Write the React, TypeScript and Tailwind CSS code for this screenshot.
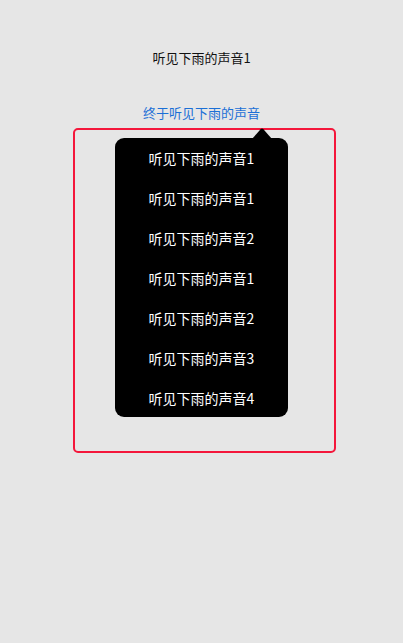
const items = [
  "听见下雨的声音1",
  "听见下雨的声音1",
  "听见下雨的声音2",
  "听见下雨的声音1",
  "听见下雨的声音2",
  "听见下雨的声音3",
  "听见下雨的声音4",
];

const font = { fontFamily: '"Noto Sans CJK SC", "Noto Sans", sans-serif' };

export default function App() {
  return (
    <div className="w-full min-h-[643px] bg-[#e6e6e6] flex flex-col" style={font}>
      <div className="pt-[49px] h-[18px] box-content text-center text-[13px] leading-[18px] text-[#111]">
        听见下雨的声音1
      </div>

      <div className="mt-[37px] text-center text-[13px] leading-[18px] text-[#1b6fd6]">
        终于听见下雨的声音
      </div>

      {/* red frame around the popover */}
      <div className="mt-[6px] ml-[73px] w-[263px] h-[325px] border-2 border-[#f4173b] rounded-[5px] pt-[12px]">
        <div className="relative ml-[40px] w-[173px] h-[279px] bg-black rounded-[9px]">
          <svg
            className="absolute -top-[10px] left-[137px]"
            width="20"
            height="11"
            viewBox="0 0 20 11"
          >
            <path d="M0 11 L8.6 1.2 Q10 -0.2 11.4 1.2 L20 11 Z" fill="#000" />
          </svg>
          <div className="flex flex-col -mt-[4px]">
            {items.map((t, i) => (
              <div
                key={i}
                className="h-[40px] flex items-center justify-center text-white text-[14px]"
              >
                {t}
              </div>
            ))}
          </div>
        </div>
      </div>
    </div>
  );
}
